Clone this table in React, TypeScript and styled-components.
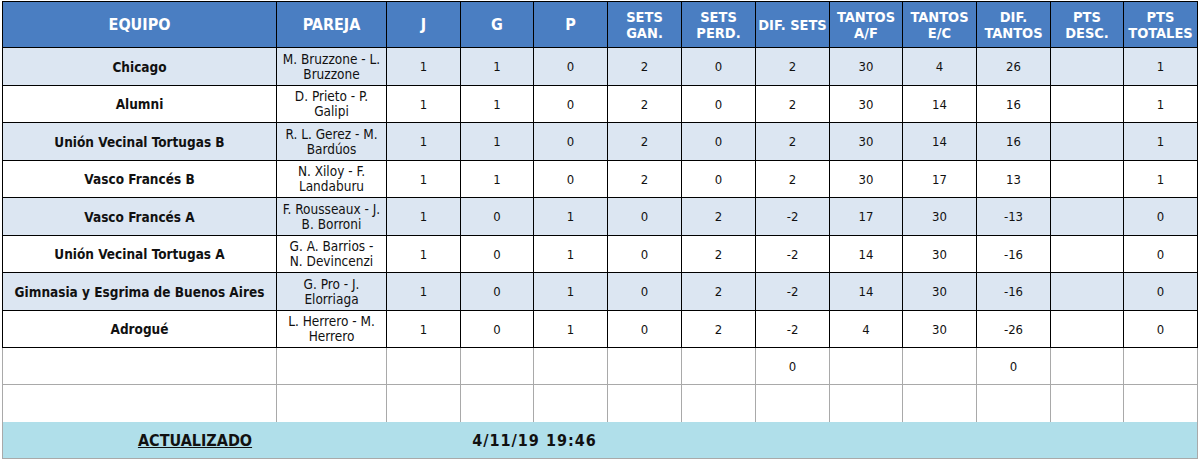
import React from "react";
import styled, { createGlobalStyle } from "styled-components";

const Global = createGlobalStyle`
  html, body { margin: 0; padding: 0; background: #ffffff; }
  body { font-family: "DejaVu Sans Condensed", "DejaVu Sans", sans-serif; color: #111; }
`;

const COLS = "274px 110px 74px 73px 74px 74px 74px 74px 73px 74px 74px 73px 74px";

const Page = styled.div`
  padding: 1px 0 0 2px;
`;

const Sheet = styled.div`
  width: 1196px;
  display: flex;
  flex-direction: column;
`;

const Row = styled.div<{ $h: number; $bg?: string; $line: string; $top?: boolean }>`
  display: grid;
  grid-template-columns: ${COLS};
  height: ${(p) => p.$h}px;
  background: ${(p) => p.$bg || "#ffffff"};
  border-left: 1px solid ${(p) => p.$line};
  ${(p) => (p.$top ? `border-top: 1px solid ${p.$line};` : "")}
`;

const Cell = styled.div<{ $line: string; $noBottom?: boolean }>`
  display: flex;
  align-items: center;
  justify-content: center;
  text-align: center;
  border-right: 1px solid ${(p) => p.$line};
  border-bottom: ${(p) => (p.$noBottom ? "none" : `1px solid ${p.$line}`)};
  min-width: 0;
  overflow: hidden;
  white-space: nowrap;
`;

const HeadCell = styled(Cell)<{ $big?: boolean }>`
  color: #ffffff;
  font-weight: bold;
  font-size: ${(p) => (p.$big ? "16px" : "14.5px")};
  line-height: 16px;
  padding: 0 1px;
`;

const TeamCell = styled(Cell)`
  font-weight: bold;
  font-size: 13.5px;
`;

const PairCell = styled(Cell)`
  font-size: 13.5px;
  line-height: 15px;
  padding: 0 2px;
`;

const NumCell = styled(Cell)`
  font-size: 13px;
`;

const Footer = styled.div`
  display: grid;
  grid-template-columns: ${COLS};
  height: 36px;
  background: #b0dfea;
  border-left: 1px solid #a9a9a9;
  border-right: 1px solid #a9a9a9;
  border-bottom: 1px solid #a9a9a9;
  width: 1194px;
  font-weight: bold;
  font-size: 16px;
  color: #111;
`;

const FootItem = styled.div<{ $span: number; $spacing?: number }>`
  grid-column: span ${(p) => p.$span};
  display: flex;
  align-items: center;
  justify-content: center;
  letter-spacing: ${(p) => p.$spacing || 0}px;
`;

const Underlined = styled.span`
  text-decoration: underline;
`;

type Team = { team: string; pair: [string, string]; n: (number | string)[] };

const teams: Team[] = [
  { team: "Chicago", pair: ["M. Bruzzone - L.", "Bruzzone"], n: [1, 1, 0, 2, 0, 2, 30, 4, 26, "", 1] },
  { team: "Alumni", pair: ["D. Prieto - P.", "Galipi"], n: [1, 1, 0, 2, 0, 2, 30, 14, 16, "", 1] },
  { team: "Unión Vecinal Tortugas B", pair: ["R. L. Gerez - M.", "Bardúos"], n: [1, 1, 0, 2, 0, 2, 30, 14, 16, "", 1] },
  { team: "Vasco Francés B", pair: ["N. Xiloy - F.", "Landaburu"], n: [1, 1, 0, 2, 0, 2, 30, 17, 13, "", 1] },
  { team: "Vasco Francés A", pair: ["F. Rousseaux - J.", "B. Borroni"], n: [1, 0, 1, 0, 2, -2, 17, 30, -13, "", 0] },
  { team: "Unión Vecinal Tortugas A", pair: ["G. A. Barrios -", "N. Devincenzi"], n: [1, 0, 1, 0, 2, -2, 14, 30, -16, "", 0] },
  { team: "Gimnasia y Esgrima de Buenos Aires", pair: ["G. Pro - J.", "Elorriaga"], n: [1, 0, 1, 0, 2, -2, 14, 30, -16, "", 0] },
  { team: "Adrogué", pair: ["L. Herrero - M.", "Herrero"], n: [1, 0, 1, 0, 2, -2, 4, 30, -26, "", 0] },
];

const headers: { label: React.ReactNode; big?: boolean }[] = [
  { label: "EQUIPO", big: true },
  { label: "PAREJA", big: true },
  { label: "J", big: true },
  { label: "G", big: true },
  { label: "P", big: true },
  { label: <>SETS<br />GAN.</> },
  { label: <>SETS<br />PERD.</> },
  { label: "DIF. SETS" },
  { label: <>TANTOS<br />A/F</> },
  { label: <>TANTOS<br />E/C</> },
  { label: <>DIF.<br />TANTOS</> },
  { label: <>PTS<br />DESC.</> },
  { label: <>PTS<br />TOTALES</> },
];

const BLACK = "#000000";
const GRAY = "#a9a9a9";
const heights = [38, 37, 38, 37, 38, 37, 38, 37];

export default function App() {
  return (
    <>
      <Global />
      <Page>
        <Sheet>
          <Row $h={46} $bg="#4a7ec2" $line={BLACK} $top>
            {headers.map((h, i) => (
              <HeadCell key={i} $line={BLACK} $big={h.big}>
                {h.label}
              </HeadCell>
            ))}
          </Row>
          {teams.map((t, r) => (
            <Row key={t.team} $h={heights[r]} $bg={r % 2 === 0 ? "#dce6f2" : "#ffffff"} $line={BLACK}>
              <TeamCell $line={BLACK}>{t.team}</TeamCell>
              <PairCell $line={BLACK}>
                {t.pair[0]}
                <br />
                {t.pair[1]}
              </PairCell>
              {t.n.map((v, i) => (
                <NumCell key={i} $line={BLACK}>
                  {v}
                </NumCell>
              ))}
            </Row>
          ))}
          <Row $h={37} $line={GRAY}>
            {Array.from({ length: 13 }).map((_, i) => (
              <NumCell key={i} $line={GRAY}>
                {i === 7 || i === 10 ? 0 : ""}
              </NumCell>
            ))}
          </Row>
          <Row $h={37} $line={GRAY}>
            {Array.from({ length: 13 }).map((_, i) => (
              <NumCell key={i} $line={GRAY} $noBottom />
            ))}
          </Row>
          <Footer>
            <FootItem $span={2}>
              <Underlined>ACTUALIZADO</Underlined>
            </FootItem>
            <FootItem $span={4} $spacing={1}>4/11/19 19:46</FootItem>
          </Footer>
        </Sheet>
      </Page>
    </>
  );
}
